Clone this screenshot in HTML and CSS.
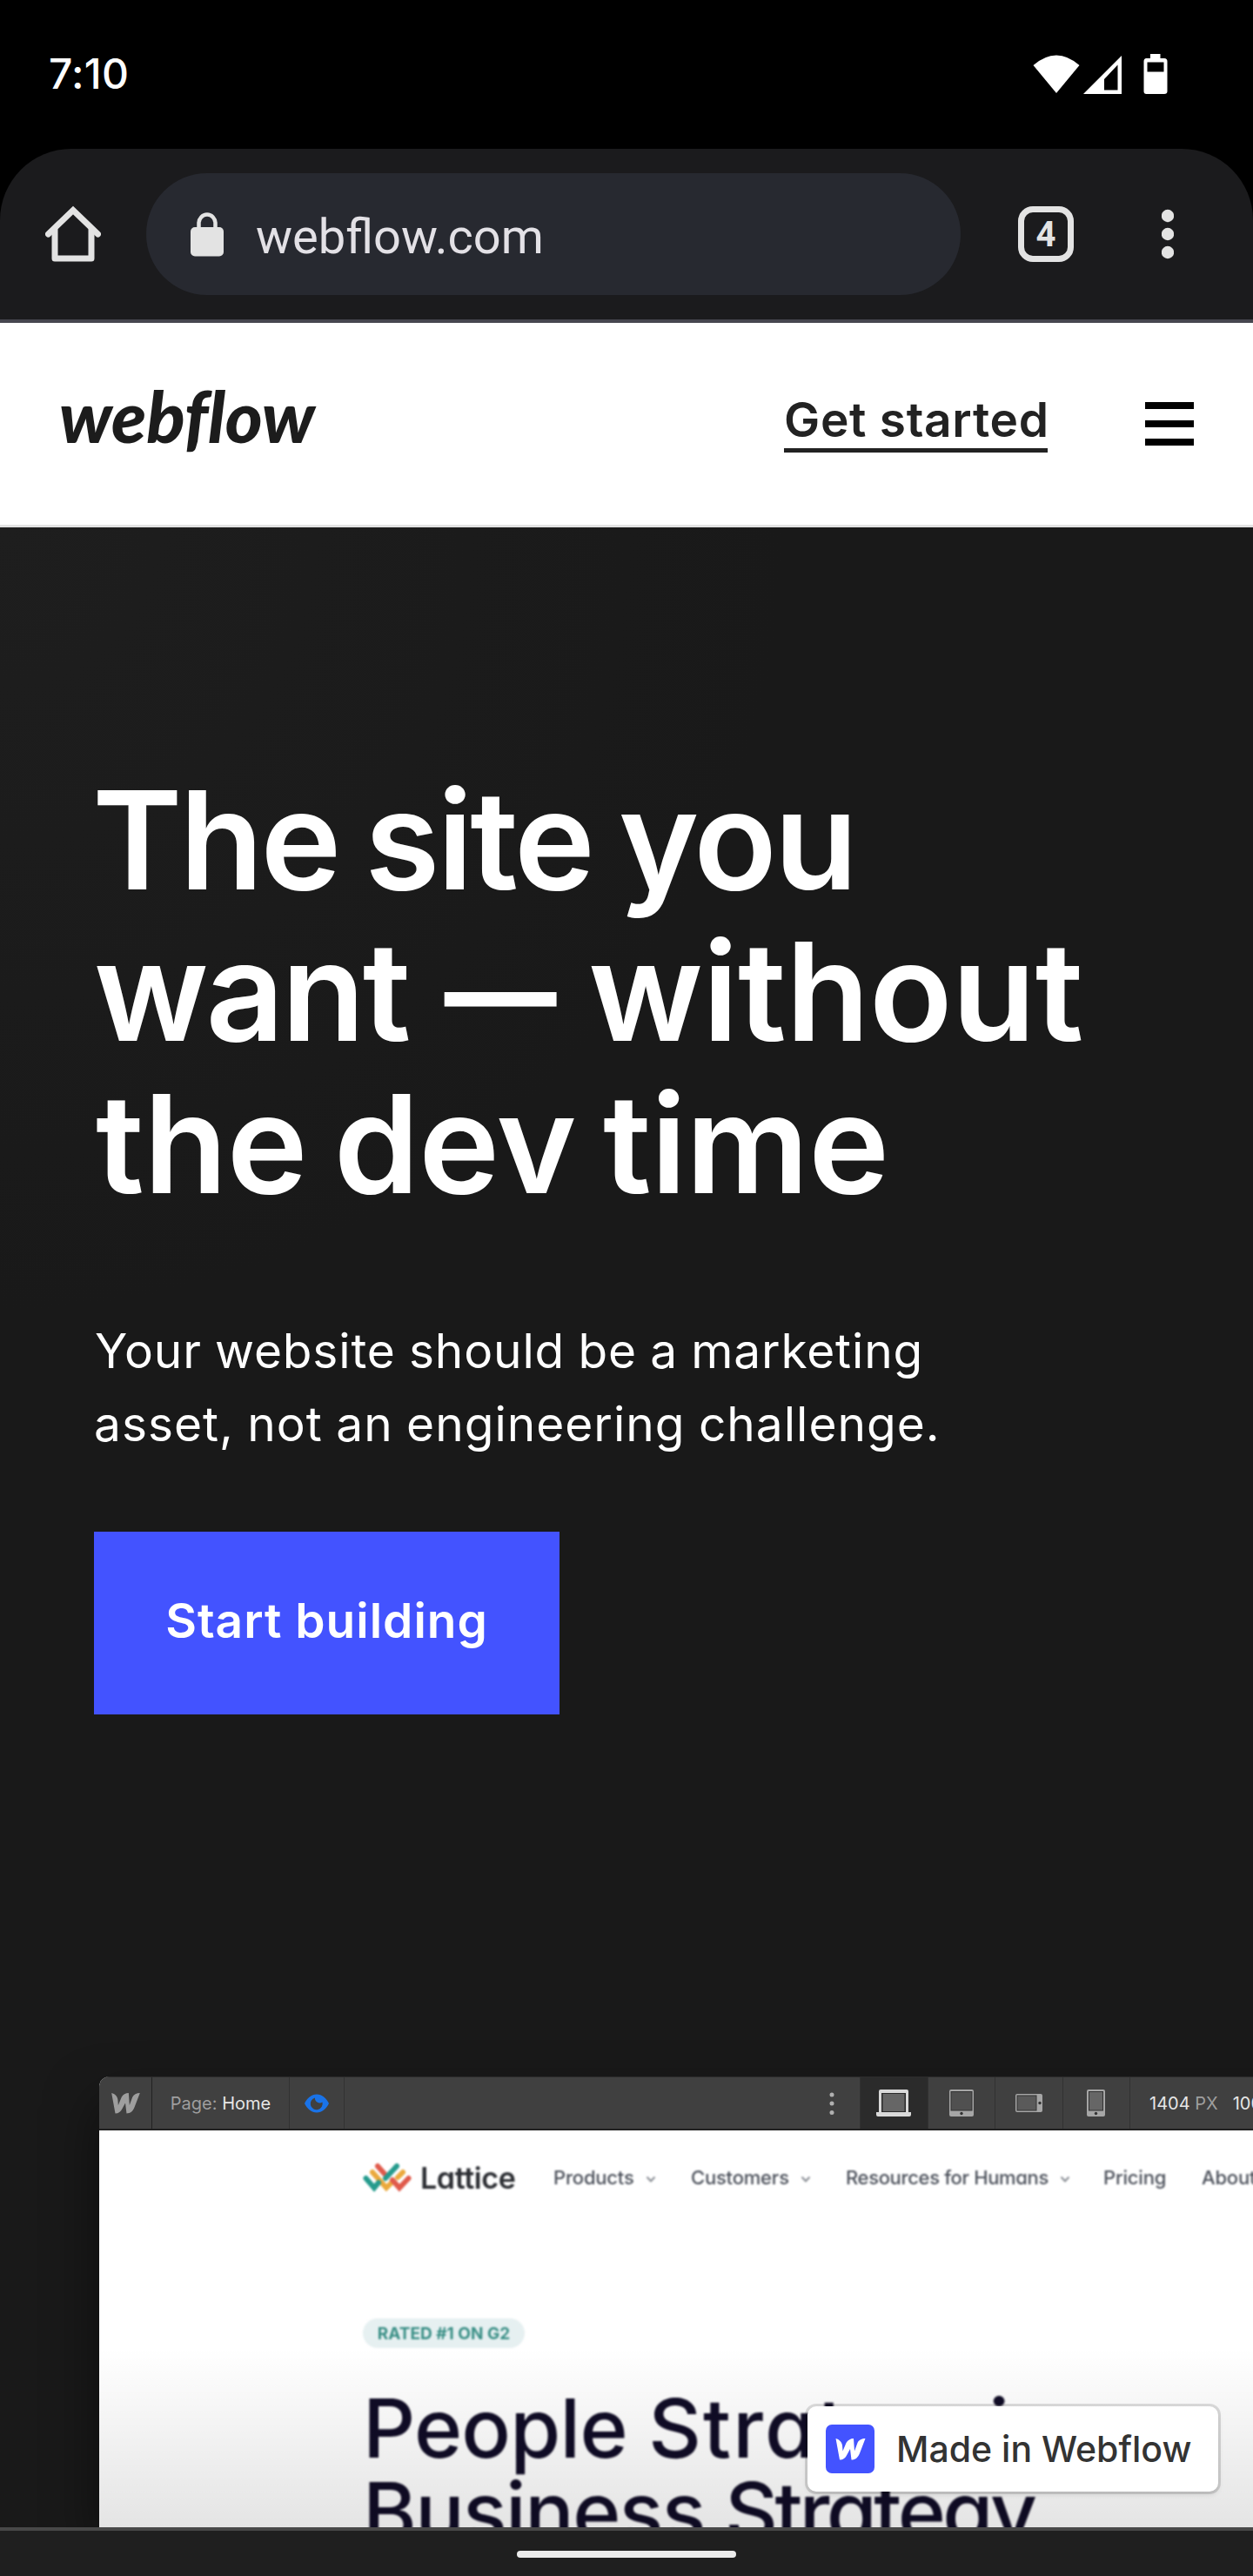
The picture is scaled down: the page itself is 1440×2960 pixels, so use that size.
FILE: index.html
```
<!DOCTYPE html>
<html lang="en">
<head>
<meta charset="utf-8">
<title>Webflow</title>
<link rel="stylesheet" href="styles.css">
</head>
<body>
<svg width="0" height="0" class="defs">
  <symbol id="w-mark" viewBox="0 0 34 25"><path d="M0 0C4 1 7 4 7.500 8L8 14.500 12 5C13.500 2 17 0 20.500 0L21.500 14.500 25 5C26.500 1.500 30 0 34 0L27.500 17C25.500 22 22.500 24.500 18 24.500L16.500 12 13 18.500C11 22.500 8.500 24.500 4.500 24.500Z" fill="currentColor"/></symbol>
  <symbol id="chevron" viewBox="0 0 12 8"><path d="M1.500 1.500 6 6.200 10.500 1.500" fill="none" stroke="currentColor" stroke-width="2"/></symbol>
</svg>

<div class="status-bar">
  <span class="clock">7:10</span>
  <svg class="status-icons" width="156" height="48" viewBox="0 0 156 48" fill="#fff">
    <path d="M.5 13Q27-10 53.500 13L27 45Z"/>
    <path fill-rule="evenodd" d="M102 2V46H58ZM97.500 12.500 82 29V41.500H97.500Z"/>
    <path fill-rule="evenodd" d="M135 0H146.500V5H151Q154.500 5 154.500 8.500V43Q154.500 46 151 46H130.500Q127.500 46 127.500 43V8.500Q127.500 5 130.500 5H135ZM131.500 9.500V20.500H150.500V9.500Z"/>
  </svg>
</div>

<div class="browser-bar">
  <svg class="home" width="64" height="66" viewBox="0 0 64 66" fill="none" stroke="#e3e3e3" stroke-width="7" stroke-linejoin="round" stroke-linecap="round"><path stroke-linejoin="miter" d="M3.500 33 32 5.500 60.500 33"/><path d="M11 28V61H53V28"/></svg>
  <div class="omnibox">
    <svg width="38" height="51" viewBox="0 0 38 51"><rect y="17" width="38" height="33.500" rx="5" fill="#e3e3e3"/><path d="M9.500 20V12.500a9.500 10 0 0 1 19 0V20" fill="none" stroke="#e3e3e3" stroke-width="4.500"/></svg>
    <span class="url">webflow.com</span>
  </div>
  <div class="tabs">4</div>
  <svg class="more" width="14" height="58" viewBox="0 0 14 58" fill="#e3e3e3"><circle cx="7" cy="8" r="7.200"/><circle cx="7" cy="29" r="7.200"/><circle cx="7" cy="50" r="7.200"/></svg>
</div>

<header class="site-nav">
  <a class="wordmark">webflow</a>
  <a class="get-started">Get started</a>
  <div class="burger"><i></i><i></i><i></i></div>
</header>

<main class="hero">
  <h1><span class="l1">The site you</span><span class="l2">want <em>—</em> <b>without</b></span><span class="l3">the dev time</span></h1>
  <p><span class="p1">Your website should be a marketing</span><span class="p2">asset, not an engineering challenge.</span></p>
  <a class="cta">Start building</a>

  <section class="designer">
    <div class="tools">
      <div class="cell logo"><svg width="33" height="24"><use href="#w-mark"/></svg></div>
      <div class="cell page"><span>Page: <b>Home</b></span></div>
      <div class="cell eye"><svg width="28" height="22" viewBox="0 0 28 22"><path fill="#1a73e8" fill-rule="evenodd" d="M0 11C3 5 8 .5 14 .5S25 5 28 11C25 17 20 21.500 14 21.500S3 17 0 11ZM12 4.500A7 7 0 1 0 20.500 9.500Q17.500 11.500 14.500 9.500T12 4.500Z"/></svg></div>
      <div class="cell spacer"><svg width="6" height="26" viewBox="0 0 6 26" fill="#b0b0b0"><circle cx="3" cy="3" r="2.500"/><circle cx="3" cy="13" r="2.500"/><circle cx="3" cy="23.500" r="2.500"/></svg></div>
      <div class="cell device active"><svg width="40" height="31" viewBox="0 0 40 31"><path d="M5 0H35Q37 0 37 2V26H40V29Q40 31 38 31H2Q0 31 0 29V26H3V2Q3 0 5 0Z" fill="#d9d9d9"/><rect x="6" y="4" width="28" height="22" fill="#2b2b2b"/><rect x="7.500" y="5" width="25" height="20" fill="#666"/></svg></div>
      <div class="cell device"><svg width="28" height="31" viewBox="0 0 28 31"><rect width="28" height="31" rx="2" fill="#a6a6a6"/><rect x="1.500" y="2" width="25" height="22.500" fill="#333"/><rect x="2.500" y="3" width="23" height="20.500" fill="#505050"/><circle cx="14" cy="27.500" r="1.700" fill="#333"/></svg></div>
      <div class="cell device"><svg width="31" height="21" viewBox="0 0 31 21"><rect width="31" height="21" rx="2" fill="#a6a6a6"/><rect x="1.500" y="1.500" width="23" height="18" fill="#333"/><rect x="2.500" y="2.500" width="21" height="16" fill="#5a5a5a"/><circle cx="28" cy="10.500" r="1.700" fill="#333"/></svg></div>
      <div class="cell device"><svg width="21" height="31" viewBox="0 0 21 31"><rect width="21" height="31" rx="2" fill="#a6a6a6"/><rect x="2" y="2" width="17" height="22.500" fill="#333"/><rect x="3" y="3" width="15" height="20.500" fill="#666"/><circle cx="10.500" cy="27.500" r="1.700" fill="#333"/></svg></div>
      <div class="cell size"><span><b>1404</b> PX</span><b>100</b></div>
    </div>
    <div class="canvas">
      <nav class="lattice-nav">
        <svg width="56" height="34" viewBox="0 0 56 34" fill="none" stroke-width="6" stroke-linecap="round">
          <path d="M11 11 27 29 34 22" stroke="#eba93c"/><path d="M3.500 18 13 29 18 23" stroke="#259b8d"/>
          <path d="M17 4 25 13" stroke="#e05a4b"/><path d="M39 4 26 18" stroke="#259b8d"/>
          <path d="M46 11 40 17" stroke="#eba93c"/><path d="M34 20 42 29 52.500 18" stroke="#e05a4b"/>
        </svg>
        <span class="brand">Lattice</span>
        <span class="item">Products<svg width="12" height="8"><use href="#chevron"/></svg></span>
        <span class="item">Customers<svg width="12" height="8"><use href="#chevron"/></svg></span>
        <span class="item tight">Resources for Humans<svg width="12" height="8"><use href="#chevron"/></svg></span>
        <span class="item">Pricing</span>
        <span class="item">About</span>
      </nav>
      <span class="tag">RATED #1 ON G2</span>
      <h2><span>People <b class="wide">Strat</b><b class="narrow">egy is</b></span><span class="h2b">Business <b class="snug">Strategy</b></span></h2>
    </div>
  </section>

  <a class="made-in"><span class="made-icon"><svg width="35" height="25"><use href="#w-mark"/></svg></span>Made in Webflow</a>
</main>

<footer class="gesture-bar"><div class="handle"></div></footer>
</body>
</html>
```
FILE: styles.css
```
* { box-sizing: border-box; }
body {
  margin: 0;
  width: 1440px;
  height: 2960px;
  overflow: hidden;
  background: #000;
  font-family: Inter, "Liberation Sans", sans-serif;
}
.defs { position: absolute; }
svg { display: block; flex: none; }

.status-bar {
  height: 171px;
  padding: 54px 97px 0 56px;
  display: flex;
  justify-content: space-between;
  color: #fff;
}
.clock { font-size: 48px; line-height: 61px; font-weight: 500; letter-spacing: .2px; }
.status-icons { margin-top: 8px; }

.browser-bar {
  height: 200px;
  padding: 0 91px 0 52px;
  display: flex;
  align-items: center;
  background: #1b1b1d;
  border-bottom: 4px solid #46464f;
  border-radius: 82px 82px 0 0;
}
.omnibox {
  width: 936px;
  height: 140px;
  margin-left: 52px;
  padding-left: 51px;
  border-radius: 70px;
  background: #272930;
  display: flex;
  align-items: center;
  gap: 37px;
}
.url { font: 400 56px/66px Roboto, sans-serif; color: #e3e1e6; margin-top: 6px; }
.tabs {
  width: 64px;
  height: 64px;
  margin-left: 66px;
  border: 7px solid #e3e3e3;
  border-radius: 17px;
  font: 700 40px/52px Roboto, sans-serif;
  color: #e3e3e3;
  text-align: center;
}
.more { margin-left: auto; }

.site-nav {
  height: 235px;
  padding: 64px 68px 0 68px;
  display: flex;
  align-items: flex-start;
  background: #fff;
  border-bottom: 3px solid #e2e2e2;
  color: #1e1e1e;
}
.wordmark { margin-top: 2px; font: italic 900 82px/80px Lato, sans-serif; letter-spacing: -.2px; color: #1c1c1c; }
.get-started {
  width: 303px;
  height: 68px;
  margin: 17px 112px 0 auto;
  border-bottom: 5px solid #222;
  font-size: 55px;
  line-height: 60px;
  font-weight: 560;
  letter-spacing: .7px;
  white-space: nowrap;
  color: #222;
}
.burger { width: 56px; margin-top: 27px; display: grid; gap: 13px; }
.burger i { height: 8px; background: #000; }

.hero {
  position: relative;
  height: 2298px;
  padding-top: 272px;
  overflow: hidden;
  color: #fff;
  background: radial-gradient(circle at 0 0, #1e1e1e, #191919 900px);
}
h1, h2, p { margin: 0; white-space: nowrap; }
h1 span, h2 span, p span { display: block; }
h1 b, h2 b { font-weight: inherit; }
h1 { margin-left: 106px; font-size: 157px; line-height: 174.4px; font-weight: 560; }
.l1 { letter-spacing: -3.2px; word-spacing: -6px; }
.l2 { letter-spacing: -3px; margin-left: 2px; }
.l2 em { display: inline-block; margin: 0 -11px 0 -9px; font-style: normal; transform: scaleX(.82); }
.l2 b { letter-spacing: -.5px; }
.l3 { letter-spacing: -.6px; word-spacing: -8px; margin-left: 4px; }
p { margin: 108.8px 0 0 109px; font-size: 55px; line-height: 84px; }
.p1 { letter-spacing: .85px; word-spacing: -1px; }
.p2 { letter-spacing: 1px; word-spacing: -1px; margin-left: -1px; }
.cta {
  width: 535px;
  height: 210px;
  margin: 82px 0 0 108px;
  padding-top: 72px;
  display: block;
  background: #4353ff;
  font-size: 55px;
  line-height: 60px;
  font-weight: 560;
  letter-spacing: 1px;
  text-align: center;
}

.designer {
  width: 1500px;
  margin: 416px 0 0 114px;
  border-radius: 12px 0 0 0;
  overflow: hidden;
  background: #fff;
  box-shadow: 0 30px 60px rgba(0, 0, 0, .5);
}
.tools {
  height: 62px;
  display: flex;
  background: #404040;
  border-top: 1px solid #2c2c2c;
  border-bottom: 2px solid #222;
  font-size: 20px;
  color: #9e9e9e;
}
.tools b { font-weight: 400; color: #e6e6e6; }
.cell { display: flex; align-items: center; justify-content: center; border-right: 1px solid #323232; flex: none; }
.logo { width: 61px; color: #9e9e9e; border-right-color: #222; }
.page { width: 158px; }
.eye { width: 63px; }
.spacer { width: 593px; justify-content: flex-end; padding-right: 29px; }
.device { width: 77.5px; }
.active { background: #2b2b2b; }
.size { justify-content: flex-start; padding-left: 22px; gap: 17px; border: 0; }

.canvas {
  height: 456px;
  padding-left: 303px;
  position: relative;
  font-feature-settings: "cv11";
}
.canvas::after {
  content: "";
  position: absolute;
  inset: 250px 0 0 0;
  background: linear-gradient(rgba(0, 0, 0, 0), rgba(0, 0, 0, .105));
}
.lattice-nav {
  height: 108px;
  display: grid;
  grid-template-columns: 66px 153px 158px 178px 296px 113px 100px;
  align-items: center;
  white-space: nowrap;
  filter: blur(.8px);
}
.brand { font-size: 34px; font-weight: 600; letter-spacing: -.4px; color: #2c2e33; }
.item { display: flex; align-items: center; gap: 13px; font-size: 22px; font-weight: 500; color: #4c515b; letter-spacing: -.2px; }
.tight { letter-spacing: -.35px; }
.item svg { color: #888c93; margin-top: 3px; }
.tag {
  width: 186px;
  height: 34px;
  margin-top: 108px;
  display: flex;
  align-items: center;
  justify-content: center;
  border-radius: 17px;
  background: #e6f0f1;
  color: #3a8f86;
  font-size: 19px;
  font-weight: 700;
  filter: blur(.8px);
}
h2 { margin-top: 43.5px; font-size: 94px; line-height: 96.7px; font-weight: 500; letter-spacing: -.8px; color: #100c26; filter: blur(1px); }
.wide { letter-spacing: 2.2px; }
.narrow { letter-spacing: -7.500px; }
.h2b { letter-spacing: -1.6px; }
.snug { letter-spacing: -3.6px; }

.made-in {
  position: absolute;
  left: 928px;
  top: 2159px;
  width: 472px;
  height: 98px;
  padding-left: 21px;
  display: flex;
  align-items: center;
  gap: 25px;
  border-radius: 10px;
  background: #fff;
  box-shadow: 0 0 0 3px rgba(0, 0, 0, .12), 0 3px 6px rgba(0, 0, 0, .12);
  color: #333;
  font-size: 41px;
  font-weight: 550;
  white-space: nowrap;
}
.made-icon { width: 56px; height: 56px; border-radius: 7px; background: #4353ff; color: #fff; display: grid; place-items: center; }

.gesture-bar {
  height: 56px;
  border-top: 4px solid #484848;
  padding-top: 23px;
  background: #1f1f1f;
}
.handle { width: 252px; height: 8px; margin: 0 auto; border-radius: 4px; background: #ebebeb; }
```
